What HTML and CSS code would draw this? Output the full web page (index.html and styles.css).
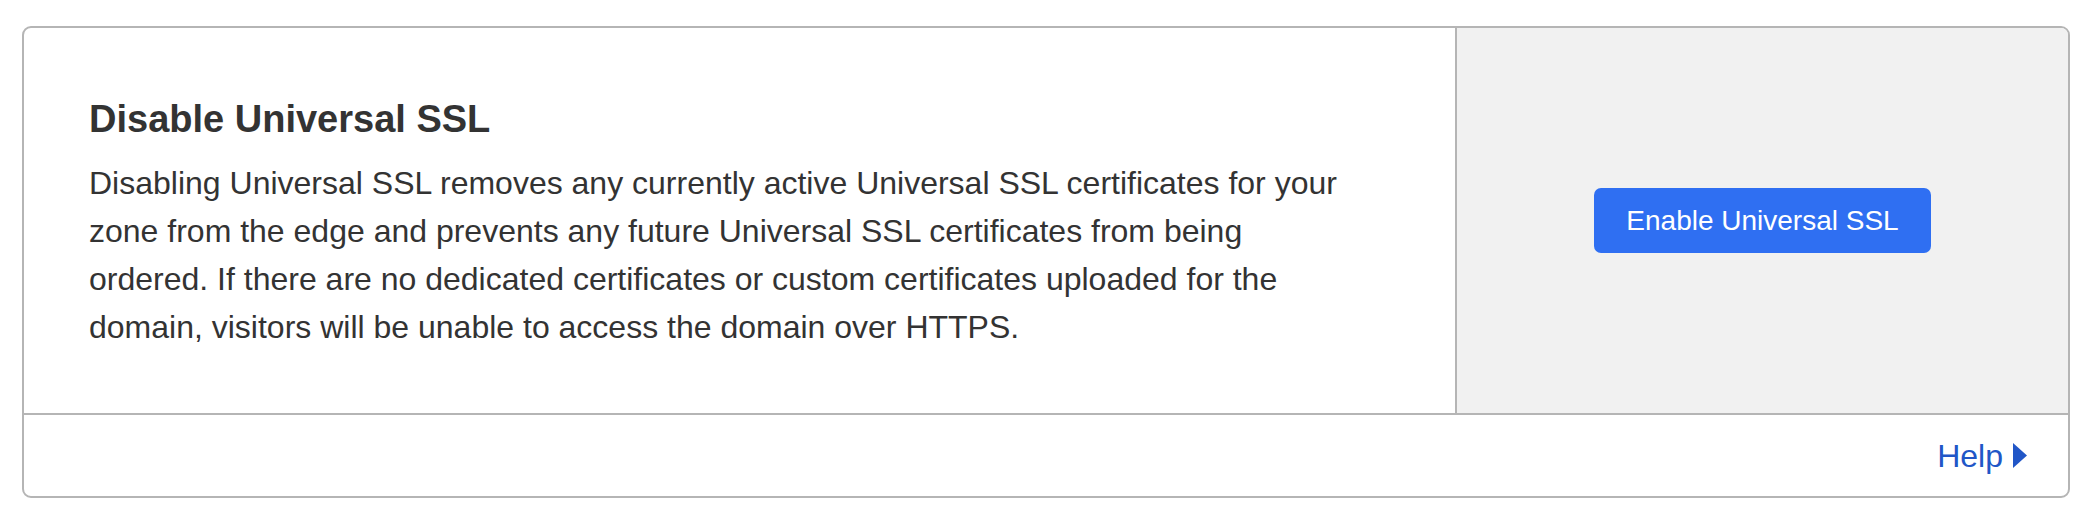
FILE: index.html
```html
<!DOCTYPE html>
<html lang="en">
<head>
<meta charset="utf-8">
<title>Disable Universal SSL</title>
<link rel="stylesheet" href="styles.css">
</head>
<body>
  <section class="card">
    <div class="card-main">
      <div class="card-content">
        <h3 class="card-title">Disable Universal SSL</h3>
        <p class="card-text">Disabling Universal SSL removes any currently active Universal SSL certificates for your zone from the edge and prevents any future Universal SSL certificates from being ordered. If there are no dedicated certificates or custom certificates uploaded for the domain, visitors will be unable to access the domain over HTTPS.</p>
      </div>
      <div class="card-control">
        <button class="btn-primary" type="button">Enable Universal SSL</button>
      </div>
    </div>
    <div class="card-footer">
      <a class="help-link" href="#">Help<svg class="help-caret" width="14" height="25" viewBox="0 0 14 25" aria-hidden="true"><polygon points="0,0 14,12.5 0,25" fill="currentColor"/></svg></a>
    </div>
  </section>
</body>
</html>
```

FILE: styles.css
```css
html, body {
  margin: 0;
  background: #ffffff;
}

body {
  padding: 26px 24px 26px 22px;
  font-family: "Liberation Sans", Arial, sans-serif;
  color: #333333;
}

.card {
  border: 2px solid #b5b5b5;
  border-radius: 9px;
  overflow: hidden;
  background: #ffffff;
}

.card-main {
  display: flex;
  border-bottom: 2px solid #b5b5b5;
  height: 385px;
}

.card-content {
  flex: 1 1 auto;
  padding: 68px 92px 0 65px;
}

.card-title {
  margin: 0;
  font-size: 38px;
  line-height: 46px;
  font-weight: 700;
  color: #333333;
}

.card-text {
  margin: 17px 0 0;
  font-size: 32px;
  line-height: 48px;
  color: #333333;
}

.card-control {
  flex: 0 0 611px;
  border-left: 2px solid #b5b5b5;
  background: #f1f1f1;
  display: flex;
  align-items: center;
  justify-content: center;
}

.btn-primary {
  height: 65px;
  padding: 0 32px;
  border: 0;
  border-radius: 7px;
  background: #2f6ff2;
  color: #ffffff;
  font-family: "Liberation Sans", Arial, sans-serif;
  font-size: 28px;
  cursor: pointer;
}

.card-footer {
  height: 81px;
  display: flex;
  align-items: center;
  justify-content: flex-end;
  padding-right: 41px;
}

.help-link {
  display: flex;
  align-items: center;
  gap: 10px;
  color: #2156c7;
  text-decoration: none;
  font-size: 32px;
  line-height: 36px;
}

.help-caret {
  display: block;
}
```
